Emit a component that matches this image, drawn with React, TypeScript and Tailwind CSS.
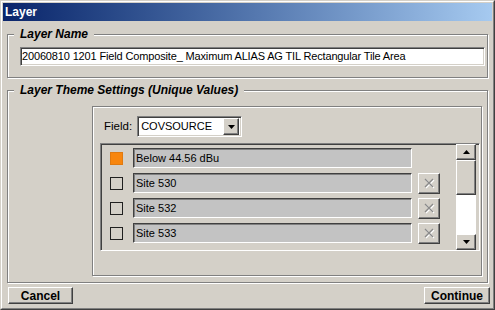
import React from "react";

const font = "font-['Liberation_Sans',Arial,sans-serif]";
const raised =
  "border border-t-white border-l-white border-r-[#404040] border-b-[#404040] shadow-[inset_-1px_-1px_0_#808080] bg-[#d4d0c8]";
const sunken =
  "border border-t-[#808080] border-l-[#808080] border-r-white border-b-white shadow-[inset_1px_1px_0_#404040,inset_-1px_-1px_0_#d4d0c8]";
const etched = "border border-[#808080] shadow-[inset_1px_1px_0_#fff,1px_1px_0_#fff]";

function Legend({ children }: { children: React.ReactNode }) {
  return (
    <span className="absolute left-[6px] top-[-8px] bg-[#d4d0c8] px-[6px] text-[12px] leading-[14px] font-bold italic text-black">
      {children}
    </span>
  );
}

function XGlyph() {
  return (
    <svg width="11" height="11" viewBox="0 0 11 11">
      <path d="M2 2 L10 10 M10 2 L2 10" stroke="#fff" strokeWidth="1.3" />
      <path d="M1 1 L9 9 M9 1 L1 9" stroke="#8a8a8a" strokeWidth="1.3" />
    </svg>
  );
}

function Tri({ up }: { up?: boolean }) {
  return (
    <svg width="7" height="4" viewBox="0 0 7 4">
      {up ? <path d="M3.5 0 L7 4 L0 4 Z" fill="#000" /> : <path d="M0 0 L7 0 L3.5 4 Z" fill="#000" />}
    </svg>
  );
}

const rows = [
  { label: "Below 44.56 dBu", color: true, x: false },
  { label: "Site 530", color: false, x: true },
  { label: "Site 532", color: false, x: true },
  { label: "Site 533", color: false, x: true },
];

export default function App() {
  return (
    <div className={`${font} w-[495px] h-[310px] bg-[#d4d0c8] border border-t-[#d4d0c8] border-l-[#d4d0c8] border-r-[#404040] border-b-[#404040] text-black`}>
      <div className="h-full border border-t-white border-l-white border-r-[#808080] border-b-[#808080] p-[1px] flex flex-col">
        <div className="h-[18px] bg-linear-to-r from-[#0a246a] to-[#a6caf0] flex items-center pl-[2px]">
          <span className="text-white font-bold text-[12px] leading-none">Layer</span>
        </div>

        <div className="flex flex-col px-[4px]">
          <div className={`relative mt-[13px] h-[44px] ${etched} pl-[12px] pr-[2px] pt-[12px]`}>
            <Legend>Layer Name</Legend>
            <div className={`h-[19px] bg-white ${sunken} flex items-center pl-[1px] text-[11px] tracking-[-0.15px] leading-none whitespace-nowrap overflow-hidden`}>
              20060810 1201 Field Composite_ Maximum ALIAS AG TIL Rectangular Tile Area
            </div>
          </div>

          <div className={`relative mt-[12px] h-[193px] ${etched} pl-[84px] pr-[5px] pt-[15px]`}>
            <Legend>Layer Theme Settings (Unique Values)</Legend>
            <div className={`h-[170px] ${etched} flex flex-col pl-[11px] pt-[9px]`}>
              <div className="flex items-center gap-[5px] h-[21px]">
                <span className="text-[11.5px]">Field:</span>
                <div className={`w-[105px] h-[21px] bg-white ${sunken} flex items-center pl-[3px] pr-[2px]`}>
                  <span className="flex-1 text-[11px] leading-none">COVSOURCE</span>
                  <div className={`w-[16px] h-[17px] ${raised} flex items-center justify-center`}>
                    <Tri />
                  </div>
                </div>
              </div>

              <div className={`-ml-[4px] mt-[6px] w-[380px] h-[108px] ${sunken} flex overflow-hidden`}>
                <div className="flex-1 flex flex-col gap-[5px] pt-[4px] pl-[9px]">
                  {rows.map((r) => (
                    <div key={r.label} className="flex items-center h-[20px] shrink-0">
                      {r.color ? (
                        <div className="w-[13px] h-[13px] bg-[#f8860e] border border-[#e07a10]" />
                      ) : (
                        <div className="w-[13px] h-[13px] border border-[#202020]" />
                      )}
                      <div className="ml-[10px] w-[279px] h-[20px] bg-[#c3c3c3] border border-t-[#404040] border-l-[#404040] border-r-white border-b-white shadow-[inset_1px_1px_0_#808080] flex items-center pl-[2px] text-[11px] leading-none">
                        {r.label}
                      </div>
                      {r.x && (
                        <div className={`ml-[6px] w-[22px] h-[21px] ${raised} flex items-center justify-center`}>
                          <XGlyph />
                        </div>
                      )}
                    </div>
                  ))}
                </div>
                <div className="w-[20px] mr-[3px] flex flex-col">
                  <div className={`h-[16px] ${raised} flex items-center justify-center`}>
                    <Tri up />
                  </div>
                  <div className={`h-[35px] ${raised}`} />
                  <div className="flex-1 bg-white" />
                  <div className={`h-[16px] ${raised} flex items-center justify-center`}>
                    <Tri />
                  </div>
                </div>
              </div>
            </div>
          </div>
        </div>

        <div className="flex justify-between pl-[5px] pr-[2px] mt-[4px]">
          <div className={`w-[65px] h-[17px] ${raised} flex items-center justify-center text-[12px] font-bold leading-none`}>
            Cancel
          </div>
          <div className={`w-[66px] h-[17px] ${raised} flex items-center justify-center text-[12px] font-bold leading-none`}>
            Continue
          </div>
        </div>
      </div>
    </div>
  );
}
